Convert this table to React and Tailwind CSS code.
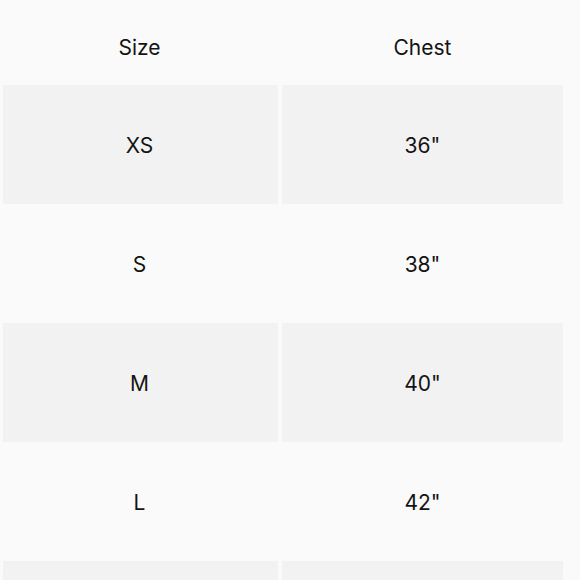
const rows = [
  { size: "XS", chest: '36"' },
  { size: "S", chest: '38"' },
  { size: "M", chest: '40"' },
  { size: "L", chest: '42"' },
];

export default function App() {
  return (
    <div className="w-[580px] h-[580px] overflow-hidden bg-[#fafafa] px-[3px] text-[21px] text-[#141414] font-['Inter',sans-serif]">
      <div className="grid grid-cols-[275px_281px] gap-x-[4px]">
        <div className="h-[85px] pt-[11px] pr-[2px] flex items-center justify-center">Size</div>
        <div className="h-[85px] pt-[11px] flex items-center justify-center">Chest</div>
        {rows.map((r, i) => (
          <div key={r.size} className="contents">
            <div className={`h-[119px] pt-[2px] pr-[2px] flex items-center justify-center ${i % 2 === 0 ? "bg-[#f2f2f2]" : ""}`}>
              {r.size}
            </div>
            <div className={`h-[119px] pt-[2px] flex items-center justify-center ${i % 2 === 0 ? "bg-[#f2f2f2]" : ""}`}>
              {r.chest}
            </div>
          </div>
        ))}
        {/* next row peeks in at the bottom edge */}
        <div className="h-[19px] bg-[#f2f2f2]"></div>
        <div className="h-[19px] bg-[#f2f2f2]"></div>
      </div>
    </div>
  );
}
